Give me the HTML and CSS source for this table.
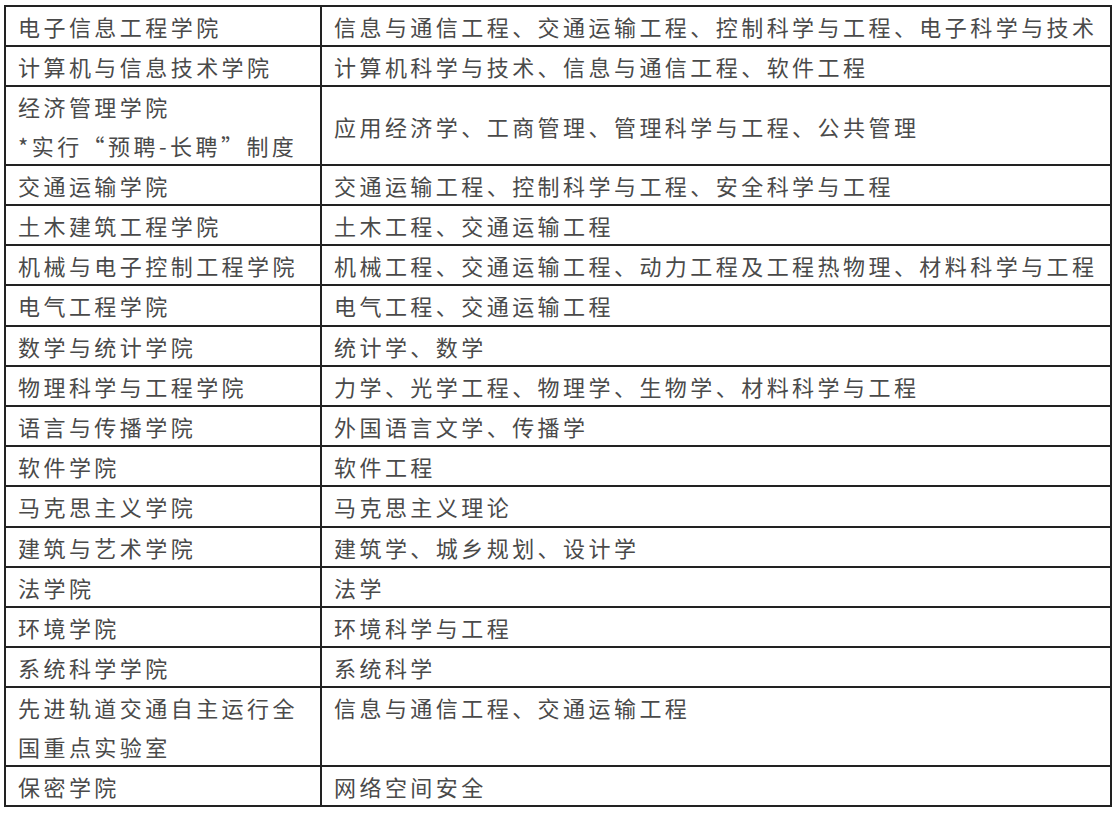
FILE: index.html
```html
<!DOCTYPE html>
<html lang="zh-CN">
<head>
<meta charset="utf-8">
<title>学院与学科</title>
<link rel="stylesheet" href="styles.css">
</head>
<body>
<div class="wrap">
<table class="grid">
<colgroup><col class="c1"><col class="c2"></colgroup>
<tbody>
<tr><td>电子信息工程学院</td><td>信息与通信工程、交通运输工程、控制科学与工程、电子科学与技术</td></tr>
<tr><td>计算机与信息技术学院</td><td>计算机科学与技术、信息与通信工程、软件工程</td></tr>
<tr><td>经济管理学院<br>*实行“预聘-长聘”制度</td><td>应用经济学、工商管理、管理科学与工程、公共管理</td></tr>
<tr><td>交通运输学院</td><td>交通运输工程、控制科学与工程、安全科学与工程</td></tr>
<tr><td>土木建筑工程学院</td><td>土木工程、交通运输工程</td></tr>
<tr><td>机械与电子控制工程学院</td><td>机械工程、交通运输工程、动力工程及工程热物理、材料科学与工程</td></tr>
<tr><td>电气工程学院</td><td>电气工程、交通运输工程</td></tr>
<tr><td>数学与统计学院</td><td>统计学、数学</td></tr>
<tr><td>物理科学与工程学院</td><td>力学、光学工程、物理学、生物学、材料科学与工程</td></tr>
<tr><td>语言与传播学院</td><td>外国语言文学、传播学</td></tr>
<tr><td>软件学院</td><td>软件工程</td></tr>
<tr><td>马克思主义学院</td><td>马克思主义理论</td></tr>
<tr><td>建筑与艺术学院</td><td>建筑学、城乡规划、设计学</td></tr>
<tr><td>法学院</td><td>法学</td></tr>
<tr><td>环境学院</td><td>环境科学与工程</td></tr>
<tr><td>系统科学学院</td><td>系统科学</td></tr>
<tr><td>先进轨道交通自主运行全<br>国重点实验室</td><td class="top">信息与通信工程、交通运输工程</td></tr>
<tr><td>保密学院</td><td>网络空间安全</td></tr>
</tbody>
</table>
</div>
</body>
</html>
```
FILE: styles.css
```css
html, body {
  margin: 0;
  padding: 0;
  background: #ffffff;
}
.wrap {
  padding: 5px 0 0 4px;
}
.grid {
  border-collapse: collapse;
  table-layout: fixed;
  width: 1106px;
  font-family: "Noto Sans CJK SC", "Noto Sans", sans-serif;
  font-weight: 400;
  font-size: 22px;
  letter-spacing: 3.45px;
  color: #4a4a4a;
}
.c1 { width: 316px; }
.c2 { width: 790px; }
.grid td {
  border: 2px solid #222222;
  padding: 0 0 0 12px;
  line-height: 38.2px;
  vertical-align: middle;
  white-space: nowrap;
  overflow: hidden;
}
.grid td.top {
  vertical-align: top;
}
```
